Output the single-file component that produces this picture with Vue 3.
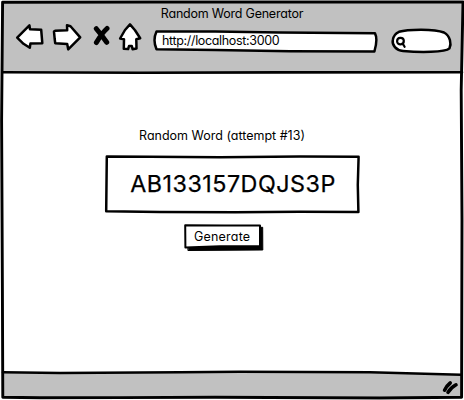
<script setup>
import { ref } from 'vue'

const title = 'Random Word Generator'
const url = ref('http://localhost:3000')
const attempt = ref(13)
const word = ref('AB133157DQJS3P')

function generate() {
  const chars = 'ABCDEFGHIJKLMNOPQRSTUVWXYZ0123456789'
  word.value = Array.from({ length: 14 }, () => chars[Math.floor(Math.random() * chars.length)]).join('')
  attempt.value++
}
</script>

<template>
  <div class="window">
    <svg class="frame" viewBox="0 0 464 400" aria-hidden="true">
      <path class="bar" d="M3 2H462V72L3 72Z" />
      <path class="bar" d="M3 372.3L70 372.8L180 372.2L240 371.6L370 372L462 374.5V397H3Z" />
      <path class="edge" d="M2.6 2.2L150 2L463 2L461.2 90L462 220L461.6 397.3L380 398L215 397.2L120 397.6L40 397.8L2.8 397.2L2.4 290L1.6 120Z" />
      <path class="rule" d="M3 72.2L140 72.8L280 72.4L462 72.2" />
      <path class="rule" d="M3 372.2L60 373L180 372.3L240 371.7L370 372.2L461 374.8" />
    </svg>

    <div class="layout">
      <header class="header">
        <h1 class="title">{{ title }}</h1>
        <nav class="toolbar">
          <svg class="icon back" viewBox="15 22 30 30">
            <path d="M17.2 37.6L29.4 25.3L30 29.3L41.2 29.8L42.3 43.2L30.4 43.6L29.8 47.8L23.5 43.8Z" />
          </svg>
          <svg class="icon forward" viewBox="52 22 30 30">
            <path d="M54 31.6L55.2 30.7L67.2 30.3L67 25.2L70.5 26.2L80.2 37.4L68.2 49.3L67.2 44L55.2 43.2L54.7 39Z" />
          </svg>
          <svg class="icon stop" viewBox="92 24 18 24">
            <path d="M96.3 28.7L101 34.5L106.7 42.3M107 28.5Q102 33 96.4 42.6" />
          </svg>
          <svg class="icon home" viewBox="118 22 24 30">
            <path d="M130 24.4L135 30.3L140.2 38.2L136.3 39.2L136.5 48.6L132.6 49.3L131.8 46L129 46L128.1 49.1L123.8 48.8L124 39.2L120.1 38.5L125 30Z" />
          </svg>
          <div class="address">
            <svg class="shape" viewBox="153 29 226 25">
              <path d="M156.5 31.5L215 31.5L280 32.4L375 33.3Q378 39 374.4 51.5L290 51.3L215 50L156.5 49.2Q152.5 40 156.5 31.5Z" />
            </svg>
            <span class="url">{{ url }}</span>
          </div>
          <svg class="icon search" viewBox="390 27 64 28">
            <path d="M399 31.8C407 29.3 434 28.4 444 32.5C450.5 36 451.5 44 449.5 48.3C445 52.5 420 52.4 403 51C396 50.3 391.8 45 392.8 40C393.4 36 395.5 33.3 399 31.8Z" />
            <path class="lens" d="M397.1 41.2C397.1 36.9 403.6 36.9 403.8 40.7C404 45.3 397.1 45.5 397.1 41.2ZM402.8 43.8L404.6 46.8" />
          </svg>
        </nav>
      </header>

      <main class="content">
        <p class="label">Random Word (attempt #{{ attempt }})</p>
        <div class="word">
          <svg class="shape" viewBox="104 154 258 61">
            <path d="M106.8 156.4L150 156.7L220 157.3L300 156.6L358.6 156.8L357.8 185L358.4 212L300 211.8L235 212.3L160 211.9L106.2 211.3Z" />
          </svg>
          <span class="value">{{ word }}</span>
        </div>
        <button class="generate" type="button" @click="generate">
          <svg class="shape" viewBox="183 223 82 29">
            <path class="shadow" d="M188 228L262.7 227.3L262.8 250L188.3 250.5Z" />
            <path class="face" d="M185.2 225.3L225 225.6L260 225.4L260 246.2L220 246.3L185.4 247.4Z" />
          </svg>
          <span class="caption">Generate</span>
        </button>
      </main>

      <footer class="footer">
        <svg class="grip" viewBox="440 378 20 18">
          <path d="M444.6 390.2Q446.5 386 450.2 383M448 392.3Q450.5 388 456 384.8" />
        </svg>
      </footer>
    </div>
  </div>
</template>

<style>
body {
  margin: 0;
  background: #fff;
}
</style>

<style scoped>
.window {
  display: grid;
  width: 464px;
  height: 400px;
  overflow: hidden;
  color: #000;
  font-family: Inter, "Liberation Sans", sans-serif;
  font-feature-settings: "cv11" 1;
  font-size: 13px;
}

.frame,
.layout {
  grid-area: 1 / 1;
  width: 464px;
  height: 400px;
}

svg {
  display: block;
  stroke: #000;
  stroke-linejoin: round;
  stroke-linecap: round;
}

.bar {
  fill: #c1c1c1;
  stroke: none;
}

.edge {
  fill: none;
  stroke-width: 2.9;
}

.rule {
  fill: none;
  stroke-width: 2.6;
}

.layout {
  display: flex;
  flex-direction: column;
}

.header {
  height: 73px;
}

.title {
  margin: 0;
  padding: 5px 0 0;
  height: 17px;
  line-height: 17px;
  font-size: 12.5px;
  font-weight: 400;
  text-align: center;
  letter-spacing: -0.22px;
}

.toolbar {
  display: flex;
  align-items: flex-start;
  padding-left: 15px;
}

.icon {
  flex: none;
  fill: #fff;
  stroke-width: 2.5;
}

.back,
.forward {
  width: 30px;
  height: 30px;
}

.forward {
  margin-left: 7px;
}

.stop {
  width: 18px;
  height: 24px;
  margin: 2px 0 0 10px;
  fill: none;
  stroke-width: 5;
}

.home {
  width: 24px;
  height: 30px;
  margin-left: 8px;
}

.address {
  display: grid;
  width: 226px;
  height: 25px;
  margin: 7px 0 0 11px;
}

.shape {
  grid-area: 1 / 1;
  width: 100%;
  height: 100%;
  fill: #fff;
  stroke-width: 2.5;
}

.url {
  grid-area: 1 / 1;
  padding-left: 9px;
  line-height: 24px;
  font-size: 12.5px;
  letter-spacing: -0.34px;
}

.search {
  width: 64px;
  height: 28px;
  margin: 5px 0 0 11px;
}

.lens {
  stroke-width: 2.2;
}

.content {
  display: flex;
  flex-direction: column;
  align-items: center;
  height: 299px;
}

.label {
  margin: 54px 0 0;
  padding-right: 20px;
  line-height: 17px;
  font-size: 12.5px;
}

.word {
  display: grid;
  width: 258px;
  height: 61px;
  margin: 10px 0 0 2px;
}

.value {
  grid-area: 1 / 1;
  line-height: 59px;
  font-size: 23.3px;
  letter-spacing: 0.5px;
  text-align: center;
  -webkit-text-stroke: 0.25px #000;
}

.generate {
  display: grid;
  width: 82px;
  height: 29px;
  margin: 8px 16px 0 0;
  padding: 0;
  border: 0;
  background: none;
  color: inherit;
  font: inherit;
  font-feature-settings: inherit;
}

.generate .shadow {
  fill: #000;
  stroke-width: 1;
}

.generate .face {
  stroke-width: 2;
}

.caption {
  grid-area: 1 / 1;
  padding-left: 11px;
  line-height: 28px;
  font-size: 12.5px;
  letter-spacing: 0.2px;
  text-align: left;
}

.footer {
  display: flex;
  justify-content: flex-end;
  height: 28px;
  padding-right: 4px;
  box-sizing: border-box;
}

.grip {
  width: 20px;
  height: 18px;
  margin-top: 6px;
  fill: none;
  stroke-width: 3.6;
}
</style>
